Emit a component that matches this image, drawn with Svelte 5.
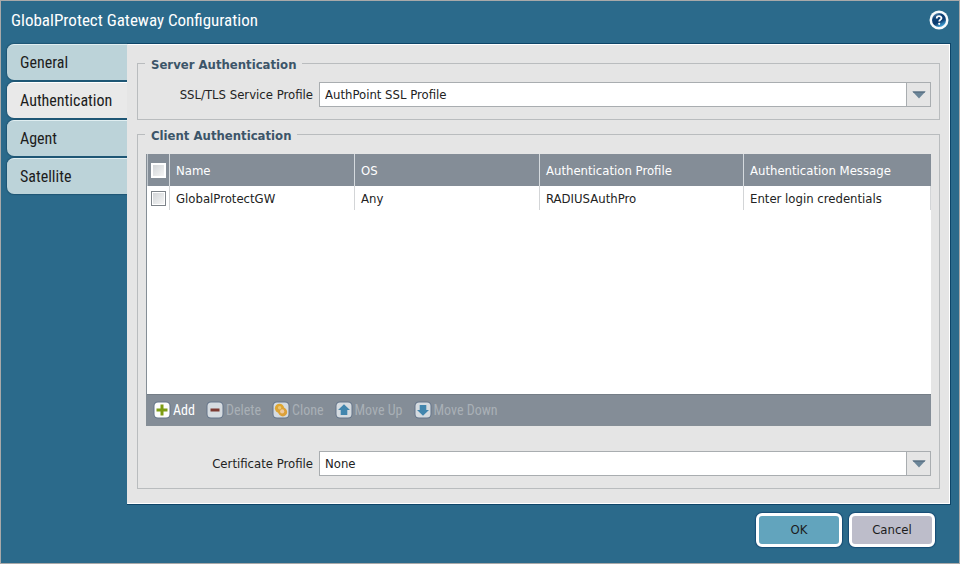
<script>
  const tabs = ['General', 'Authentication', 'Agent', 'Satellite'];
  let active = $state('Authentication');
  let sslProfile = $state('AuthPoint SSL Profile');
  let certProfile = $state('None');
  let rows = $state([
    {
      name: 'GlobalProtectGW',
      os: 'Any',
      profile: 'RADIUSAuthPro',
      message: 'Enter login credentials',
      selected: false
    }
  ]);
  const allSelected = $derived(rows.every((r) => r.selected));
  const actions = [
    { id: 'add', label: 'Add' },
    { id: 'delete', label: 'Delete' },
    { id: 'clone', label: 'Clone' },
    { id: 'up', label: 'Move Up' },
    { id: 'down', label: 'Move Down' }
  ];

  function toggleAll(event) {
    for (const r of rows) r.selected = event.currentTarget.checked;
  }
</script>

{#snippet arrow()}
  <span class="arrow" aria-hidden="true">
    <svg width="14" height="8" viewBox="0 0 14 8"><path d="M0.5 0.5h13L7 7.5z" fill="#6b8598" /><path d="M0.5 0.5h13L12.5 1.7h-11z" fill="#586e80" /></svg>
  </span>
{/snippet}

<div class="dialog" role="dialog" aria-labelledby="dialog-title">
  <header>
    <h1 id="dialog-title">GlobalProtect Gateway Configuration</h1>
    <button class="help" type="button" aria-label="Help">
      <svg width="20" height="20" viewBox="0 0 20 20">
        <defs>
          <linearGradient id="ball" x1="0" y1="0" x2="0.5" y2="1">
            <stop offset="0" stop-color="#8db4d2" />
            <stop offset="0.35" stop-color="#0f4377" />
            <stop offset="0.7" stop-color="#0b3a6e" />
            <stop offset="1" stop-color="#3c9bd0" />
          </linearGradient>
        </defs>
        <circle cx="10" cy="10" r="9.5" fill="#f7fbfd" />
        <circle cx="10" cy="10" r="7" fill="url(#ball)" />
        <path d="M7.7 8.4C7.7 5.5 12.5 5.6 12.5 8c0 1.7-2.3 1.7-2.3 3.4" fill="none" stroke="#fff" stroke-width="1.8" />
        <circle cx="10.2" cy="13.8" r="1.1" fill="#fff" />
      </svg>
    </button>
  </header>

  <div class="body">
    <nav>
      {#each tabs as tab}
        <button type="button" class="tab" class:active={tab === active} onclick={() => (active = tab)}>{tab}</button>
      {/each}
    </nav>

    <main>
      <fieldset>
        <legend>Server Authentication</legend>
        <div class="field">
          <label for="ssl">SSL/TLS Service Profile</label>
          <div class="combo">
            <select id="ssl" bind:value={sslProfile}>
              <option>AuthPoint SSL Profile</option>
              <option>None</option>
            </select>
            {@render arrow()}
          </div>
        </div>
      </fieldset>

      <fieldset class="client">
        <legend>Client Authentication</legend>
        <div class="grid">
          <div class="rows">
            <table>
              <colgroup>
                <col class="c-check" /><col class="c-name" /><col class="c-os" /><col class="c-profile" /><col />
              </colgroup>
              <thead>
                <tr>
                  <th class="check"><input type="checkbox" aria-label="Select all" checked={allSelected} onchange={toggleAll} /></th>
                  <th>Name</th>
                  <th>OS</th>
                  <th>Authentication Profile</th>
                  <th>Authentication Message</th>
                </tr>
              </thead>
              <tbody>
                {#each rows as row}
                  <tr>
                    <td class="check"><input type="checkbox" aria-label="Select {row.name}" bind:checked={row.selected} /></td>
                    <td>{row.name}</td>
                    <td>{row.os}</td>
                    <td>{row.profile}</td>
                    <td>{row.message}</td>
                  </tr>
                {/each}
              </tbody>
            </table>
          </div>
          <div class="toolbar">
            {#each actions as action}
              <button type="button" disabled={action.id !== 'add'}>
                <svg width="18" height="18" viewBox="0 0 18 18" aria-hidden="true">
                  <rect x="0.5" y="0.5" width="17" height="17" rx="4.5" fill="#64758a" />
                  <rect x="1.5" y="1.5" width="15" height="15" rx="3.5" fill={action.id === 'add' ? '#fdfdfb' : '#d5dbe0'} />
                  {#if action.id === 'add'}
                    <path d="M9 3.5v11M3.5 9h11" stroke="#7d9c13" stroke-width="3" />
                  {:else if action.id === 'delete'}
                    <path d="M4.5 9h9" stroke="#7c3a32" stroke-width="3" />
                  {:else if action.id === 'clone'}
                    <circle cx="7.5" cy="7.3" r="4.6" fill="#e0a72f" />
                    <circle cx="10.8" cy="11" r="4.4" fill="#dba03a" />
                    <path d="M6 4l7 4-5 6-4-5z" fill="#dba43a" />
                    <circle cx="7.6" cy="6.8" r="1.7" fill="#ebc777" />
                    <circle cx="10.2" cy="10.4" r="2.1" fill="#efc9a0" />
                  {:else if action.id === 'up'}
                    <path d="M9 3.2L15 9h-2.7v5H5.7V9H3z" fill="#4286ae" />
                  {:else}
                    <path d="M9 14.8L15 9h-2.7V4H5.7v5H3z" fill="#4286ae" />
                  {/if}
                </svg>
                {action.label}
              </button>
            {/each}
          </div>
        </div>
        <div class="field cert">
          <label for="cert">Certificate Profile</label>
          <div class="combo">
            <select id="cert" bind:value={certProfile}>
              <option>None</option>
              <option>AuthPoint SSL Profile</option>
            </select>
            {@render arrow()}
          </div>
        </div>
      </fieldset>
    </main>
  </div>

  <footer>
    <button type="button" class="ok">OK</button>
    <button type="button" class="cancel">Cancel</button>
  </footer>
</div>

<style>
  .dialog,
  .dialog * {
    box-sizing: border-box;
  }
  .dialog {
    --narrow: 'Roboto Condensed', 'Open Sans Condensed', 'Noto Sans Condensed', Roboto, sans-serif;
    display: flex;
    flex-direction: column;
    min-height: 100vh;
    border: 1px solid #a9a9a9;
    background: #2b6a8b;
    color: #222;
    font: 13px/16px 'DejaVu Sans Condensed', 'DejaVu Sans', sans-serif;
  }
  button,
  select {
    font: inherit;
    color: inherit;
  }
  header {
    display: flex;
    align-items: center;
    justify-content: space-between;
    height: 43px;
    padding: 0 10px;
    padding-bottom: 6px;
  }
  h1 {
    margin: 0;
    color: #fff;
    font: 17px/24px var(--narrow);
  }
  .help {
    display: block;
    padding: 0;
    border: 0;
    background: none;
    line-height: 0;
  }
  .body {
    display: flex;
    flex: 1;
    padding: 0 9px 0 6px;
  }
  nav {
    display: flex;
    flex-direction: column;
    gap: 2px;
    width: 120px;
  }
  .tab {
    height: 36px;
    padding: 0 0 0 13px;
    border: 0;
    border-top: 1px solid #e0eef1;
    border-radius: 7px 0 0 7px;
    background: #bcd3d9;
    box-shadow: 0 0 1px 1px #1f5674;
    color: #1c1c1c;
    font: 16px/20px var(--narrow);
    text-align: left;
  }
  .tab.active {
    border-top-color: #fff;
    background: #e9e9e9;
  }
  main {
    display: flex;
    flex: 1;
    flex-direction: column;
    gap: 4px;
    min-width: 0;
    padding: 8px 9px 14px;
    border: 1px solid #fff;
    border-left-color: #e5e5e5;
    background: #e5e5e5;
    box-shadow: 0 0 0 1px #0e4568;
    clip-path: inset(-1px -1px -1px 0);
  }
  fieldset {
    min-width: 0;
    margin: 0;
    padding: 9px 8px 12px;
    border: 1px solid #b9bcbe;
  }
  legend {
    margin-left: -1px;
    padding: 4px 6px 0;
    color: #3c5569;
    font: bold 13px/16px 'DejaVu Sans Condensed', 'DejaVu Sans', sans-serif;
  }
  .client {
    display: flex;
    flex: 1;
    flex-direction: column;
    padding-top: 10px;
  }
  .field {
    display: flex;
    align-items: center;
  }
  .field label {
    width: 173px;
    padding-right: 6px;
    text-align: right;
  }
  .cert {
    margin-top: 25px;
  }
  .combo {
    position: relative;
    flex: 1;
  }
  select {
    display: block;
    width: 100%;
    height: 25px;
    padding: 0 30px 0 5px;
    border: 1px solid #a9adb0;
    border-radius: 0;
    appearance: none;
    background: #fff;
  }
  .arrow {
    position: absolute;
    inset: 1px 1px 1px auto;
    display: grid;
    place-items: center;
    width: 24px;
    border-left: 1px solid #a9adb0;
    background: #e5e5e5;
    pointer-events: none;
  }
  .grid {
    display: flex;
    flex: 1;
    flex-direction: column;
    border: 1px solid #858e96;
    border-width: 0 0 1px 1px;
    background: #fff;
  }
  .rows {
    flex: 1;
    min-height: 200px;
  }
  table {
    width: 100%;
    border-collapse: separate;
    border-spacing: 0;
    table-layout: fixed;
  }
  .c-check {
    width: 23px;
  }
  .c-name,
  .c-os {
    width: 185px;
  }
  .c-profile {
    width: 204px;
  }
  th,
  td {
    height: 24px;
    padding: 2px 6px 0;
    border-right: 1px solid #d3d5d7;
    font-weight: normal;
    text-align: left;
    white-space: nowrap;
  }
  th {
    height: 32px;
    border-right-color: #d5dade;
    background: #848d97;
    color: #fff;
  }
  th:last-child {
    border-right: 0;
  }
  th.check,
  td.check {
    padding: 0;
    text-align: center;
  }
  th.check {
    border-left: 1px solid #c2c8ce;
  }
  input {
    display: inline-block;
    width: 15px;
    height: 15px;
    margin: 0;
    border: 1px solid #7d8389;
    border-radius: 0;
    appearance: none;
    background: linear-gradient(135deg, #cfd2d5, #f8f8f8);
    box-shadow: inset 0 0 0 1px #fff;
    vertical-align: middle;
  }
  th input {
    border-color: #fff;
  }
  input:checked {
    background: #2b6a8b;
  }
  .toolbar {
    display: flex;
    align-items: center;
    gap: 11px;
    height: 31px;
    padding-left: 6px;
    background: #848d97;
    box-shadow: inset 0 1px #757e87;
  }
  .toolbar button {
    display: flex;
    align-items: center;
    gap: 2px;
    padding: 0;
    border: 0;
    background: none;
    color: #fff;
    font: 14px/18px var(--narrow);
  }
  .toolbar button:disabled {
    color: #a9b0b6;
  }
  footer {
    display: flex;
    justify-content: flex-end;
    gap: 7px;
    padding: 9px 24px 16px;
  }
  footer button {
    width: 86px;
    height: 34px;
    padding: 0;
    border: 3px solid #fff;
    border-radius: 6px;
    background: #bdbdca;
    box-shadow: 0 0 1px 1px #174d75;
    color: #1c1c1c;
  }
  footer .ok {
    background: #62a4bd;
  }
</style>
